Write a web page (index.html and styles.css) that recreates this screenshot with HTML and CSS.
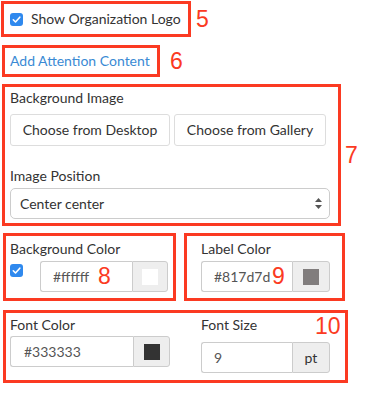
FILE: index.html
```html
<!DOCTYPE html>
<html>
<head>
<meta charset="utf-8">
<link rel="stylesheet" href="styles.css">
</head>
<body>
<div class="page">
  <div class="ann-row r5">
    <div class="box b5">
      <svg class="cb" width="13" height="13" viewBox="0 0 13 13"><rect x="0" y="0" width="13" height="13" rx="3" fill="#2f89ee"/><path d="M3.3 6.8 L5.5 9 L9.8 4.2" fill="none" stroke="#fff" stroke-width="1.6" stroke-linecap="round" stroke-linejoin="round"/></svg>
      <span class="cb-text">Show Organization Logo</span>
    </div>
    <span class="num n5">5</span>
  </div>

  <div class="ann-row r6">
    <div class="box b6"><span class="link">Add Attention Content</span></div>
    <span class="num n6">6</span>
  </div>

  <div class="ann-row r7">
    <div class="box b7">
      <div class="lbl">Background Image</div>
      <div class="btns">
        <span class="btn btn-desk">Choose from Desktop</span>
        <span class="btn btn-gal">Choose from Gallery</span>
      </div>
      <div class="lbl lbl-pos">Image Position</div>
      <div class="select">
        <span>Center center</span>
        <svg class="arrows" width="7" height="11" viewBox="0 0 7 11"><path d="M3.5 0 L7 4 L0 4 Z" fill="#555"/><path d="M0 7 L7 7 L3.5 11 Z" fill="#555"/></svg>
      </div>
    </div>
    <span class="num n7">7</span>
  </div>

  <div class="pair">
    <div class="box b8">
      <div class="lbl">Background Color</div>
      <div class="cb-row">
        <svg class="cb cb8" width="13" height="13" viewBox="0 0 13 13"><rect x="0" y="0" width="13" height="13" rx="3" fill="#2f89ee"/><path d="M3.3 6.8 L5.5 9 L9.8 4.2" fill="none" stroke="#fff" stroke-width="1.6" stroke-linecap="round" stroke-linejoin="round"/></svg>
        <div class="group g8">
          <span class="field">#ffffff</span>
          <span class="addon"><span class="swatch sw-white"></span></span>
        </div>
      </div>
      <span class="num over n8">8</span>
    </div>
    <div class="box b9">
      <div class="lbl">Label Color</div>
      <div class="group g9">
        <span class="field">#817d7d</span>
        <span class="addon"><span class="swatch sw-gray"></span></span>
      </div>
      <span class="num over n9">9</span>
    </div>
  </div>

  <div class="box b10">
    <div class="col col-left">
      <div class="lbl">Font Color</div>
      <div class="group g10a">
        <span class="field">#333333</span>
        <span class="addon"><span class="swatch sw-dark"></span></span>
      </div>
    </div>
    <div class="col col-right">
      <div class="lbl">Font Size</div>
      <div class="group g10b">
        <span class="field">9</span>
        <span class="addon addon-pt">pt</span>
      </div>
    </div>
    <span class="num over n10">10</span>
  </div>
</div>
</body>
</html>
```

FILE: styles.css
```css
* { box-sizing: border-box; }
html, body { margin: 0; padding: 0; background: #fff; }
body {
  font-family: Lato, "Open Sans", sans-serif;
  font-size: 14px;
  line-height: 20px;
  color: #333;
  width: 375px;
  height: 394px;
  overflow: hidden;
}
.page { padding-top: 1px; }

.box {
  border: 3px solid #fb3a22;
  position: relative;
}
.ann-row { display: flex; align-items: center; }

.num {
  font-family: "Liberation Sans", Arial, sans-serif;
  font-size: 23px;
  line-height: 23px;
  color: #fb3a22;
}
.over { position: absolute; }

/* 5 */
.r5 { margin-left: 1px; }
.b5 {
  width: 190px; height: 36px;
  padding-left: 6px;
  display: flex; align-items: center;
}
.cb { display: block; flex: none; }
.cb-text { margin-left: 8px; }
.n5 { margin-left: 5px; }

/* 6 */
.r6 { margin: 8px 0 0 2px; }
.b6 {
  width: 158px; height: 32px;
  padding-left: 5px;
  display: flex; align-items: center;
}
.link { color: #3a8ad4; }
.n6 { margin-left: 10px; }

/* 7 */
.r7 { margin: 7px 0 0 2px; }
.b7 {
  width: 339px; height: 142px;
  padding: 1px 0 0 5px;
}
.btns { display: flex; gap: 4px; margin-top: 6px; }
.btn {
  height: 32px;
  border: 1px solid #ddd;
  border-radius: 3px;
  display: flex; align-items: center; justify-content: center;
  color: #333;
  background: #fff;
}
.btn-desk { width: 160px; }
.btn-gal { width: 152px; }
.lbl-pos { margin-top: 20px; }
.select {
  margin-top: 2px;
  width: 320px; height: 31px;
  border: 1px solid #ccc;
  border-radius: 5px;
  padding: 0 7px 0 9px;
  display: flex; align-items: center; justify-content: space-between;
}
.arrows { display: block; }
.n7 { margin-left: 4px; }

/* 8 / 9 */
.pair { display: flex; margin: 7px 0 0 3px; gap: 8px; }
.b8 { width: 173px; height: 68px; padding: 3px 0 0 4px; }
.b9 { width: 161px; height: 68px; padding: 3px 0 0 14px; }
.cb-row { display: flex; align-items: flex-start; margin-top: 2px; }
.cb8 { margin-top: 3px; }

.group { display: flex; height: 31px; }
.field {
  flex: 1;
  border: 1px solid #ccc;
  border-right: none;
  border-radius: 3px 0 0 3px;
  padding-left: 12px;
  display: flex; align-items: center;
  color: #555;
  background: #fff;
}
.addon {
  border: 1px solid #ccc;
  border-radius: 0 3px 3px 0;
  background: #eee;
  display: flex; align-items: center; justify-content: center;
  color: #333;
}
.swatch { width: 16px; height: 16px; display: block; }
.sw-white { background: #fff; }
.sw-gray { background: #817d7d; }
.sw-dark { background: #333; }

.g8 { width: 128px; margin-left: 17px; }
.g8 .addon { width: 36px; }
.g9 { width: 129px; margin-top: 2px; }
.g9 .addon { width: 38px; }
.n8 { left: 92px; top: 29px; }
.n9 { left: 85px; top: 29px; }

/* 10 */
.b10 {
  margin: 9px 0 0 3px;
  width: 345px; height: 73px;
  padding: 2px 0 0 4px;
  display: flex; gap: 31px;
}
.col-left { width: 160px; }
.col-right { width: 129px; }
.g10a { margin-top: 1px; }
.g10a .field { padding-left: 13px; }
.g10a .addon { width: 37px; }
.g10b { margin-top: 7px; }
.g10b .addon { width: 38px; }
.n10 { left: 309px; top: 2px; }
```
